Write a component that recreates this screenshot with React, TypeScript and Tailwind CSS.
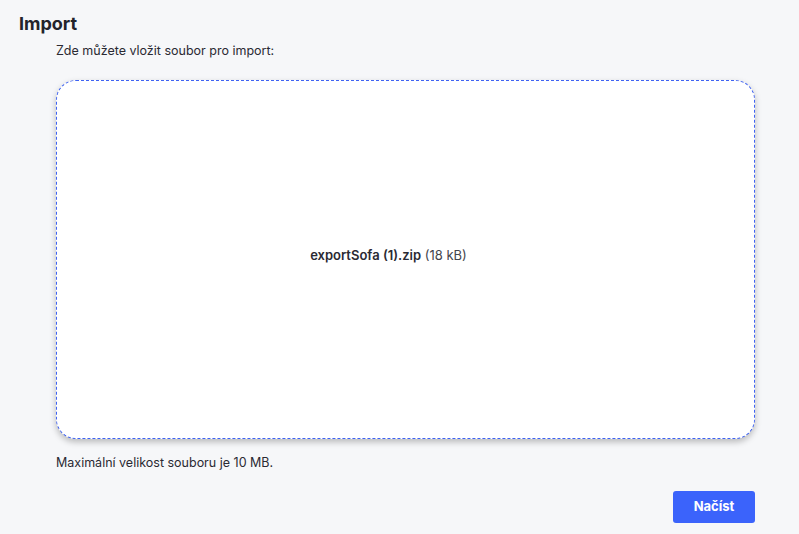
import React from "react";

export default function App() {
  return (
    <div
      className="w-[799px] h-[534px] bg-[#f6f7f9] text-[#2a2a33] overflow-hidden"
      style={{ fontFamily: "Inter, 'Noto Sans', sans-serif" }}
    >
      <div className="pt-[12px] pl-[19px]">
        <h1 className="text-[18px] leading-[24px] font-bold text-[#23232b]">Import</h1>
      </div>
      <div className="pl-[56px] pr-[44px]">
        <p className="mt-[7px] text-[12.5px] leading-[16px] text-[#2a2a33]">
          Zde můžete vložit soubor pro import:
        </p>
        <div className="mt-[21px] h-[359px] bg-white rounded-[20px] border border-dashed border-[#3f63f3] shadow-[0_3px_6px_rgba(0,0,0,0.25)] flex items-center justify-center pr-[34px] pb-[9px]">
          <span className="text-[13px] leading-[16px] text-[#2a2a33]">
            <span className="font-semibold">exportSofa (1).zip</span>{" "}
            <span className="text-[#44444c]">(18 kB)</span>
          </span>
        </div>
        <p className="mt-[16px] text-[12.5px] leading-[16px] text-[#2a2a33]">
          Maximální velikost souboru je 10 MB.
        </p>
        <div className="mt-[20px] flex justify-end">
          <button className="w-[82px] h-[32px] rounded-[3px] bg-[#3b63fb] text-white text-[13px] font-bold">
            Načíst
          </button>
        </div>
      </div>
    </div>
  );
}
